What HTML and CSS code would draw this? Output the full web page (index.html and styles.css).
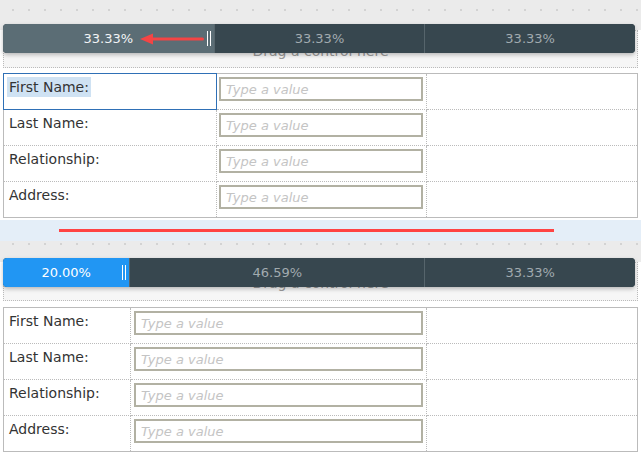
FILE: index.html
```html
<!DOCTYPE html>
<html lang="en">
<head>
    <meta charset="UTF-8">
    <meta name="viewport" content="width=device-width, initial-scale=1.0">
    <title>Column Splitter</title>
    <link rel="stylesheet" href="styles.css">
</head>
<body>

    <div class="panel panel-top">
        <div class="ruler"></div>
        <div class="drop-zone">
            <span class="drop-hint">Drag a control here</span>
            <div class="splitter">
                <div class="seg seg-grey" style="width:33.33%">
                    33.33%
                    <svg class="arrow" width="66" height="12" viewBox="0 0 66 12">
                        <polygon points="0,6 13,0.5 13,11.5" fill="#f44545"/>
                        <rect x="11" y="4.5" width="53" height="3" rx="1.5" fill="#f44545"/>
                    </svg>
                    <span class="grip"></span>
                </div>
                <div class="seg" style="width:33.33%">33.33%</div>
                <div class="seg" style="width:33.34%">33.33%</div>
            </div>
        </div>
        <table class="form-grid">
            <colgroup>
                <col style="width:213px">
                <col style="width:210px">
                <col>
            </colgroup>
            <tr>
                <td class="label-cell selected"><span class="label picked">First Name:</span></td>
                <td class="input-cell"><input type="text" placeholder="Type a value"></td>
                <td></td>
            </tr>
            <tr>
                <td class="label-cell"><span class="label">Last Name:</span></td>
                <td class="input-cell"><input type="text" placeholder="Type a value"></td>
                <td></td>
            </tr>
            <tr>
                <td class="label-cell"><span class="label">Relationship:</span></td>
                <td class="input-cell"><input type="text" placeholder="Type a value"></td>
                <td></td>
            </tr>
            <tr>
                <td class="label-cell"><span class="label">Address:</span></td>
                <td class="input-cell"><input type="text" placeholder="Type a value"></td>
                <td></td>
            </tr>
        </table>
    </div>

    <div class="divider"><span class="divider-line"></span></div>

    <div class="panel panel-bottom">
        <div class="ruler"></div>
        <div class="drop-zone">
            <span class="drop-hint">Drag a control here</span>
            <div class="splitter">
                <div class="seg seg-blue" style="width:20%">
                    20.00%
                    <span class="grip"></span>
                </div>
                <div class="seg" style="width:46.67%">46.59%</div>
                <div class="seg" style="width:33.33%">33.33%</div>
            </div>
        </div>
        <table class="form-grid">
            <colgroup>
                <col style="width:127px">
                <col style="width:296px">
                <col>
            </colgroup>
            <tr>
                <td class="label-cell"><span class="label">First Name:</span></td>
                <td class="input-cell"><input type="text" placeholder="Type a value"></td>
                <td></td>
            </tr>
            <tr>
                <td class="label-cell"><span class="label">Last Name:</span></td>
                <td class="input-cell"><input type="text" placeholder="Type a value"></td>
                <td></td>
            </tr>
            <tr>
                <td class="label-cell"><span class="label">Relationship:</span></td>
                <td class="input-cell"><input type="text" placeholder="Type a value"></td>
                <td></td>
            </tr>
            <tr>
                <td class="label-cell"><span class="label">Address:</span></td>
                <td class="input-cell"><input type="text" placeholder="Type a value"></td>
                <td></td>
            </tr>
        </table>
    </div>

</body>
</html>
```

FILE: styles.css
```css
body {
    margin: 0;
    font-family: "DejaVu Sans", Verdana, sans-serif;
    background-color: white;
    color: #333;
    overflow: hidden;
}
.panel {
    background-color: white;
}
.ruler {
    height: 30px;
    background-color: #ebebeb;
    background-image: radial-gradient(circle, #d3d3d3 1px, transparent 1.2px);
    background-size: 16px 16px;
    background-repeat: repeat-x;
    background-position: 5px 2px;
}
.panel-bottom .ruler {
    height: 21px;
    background-position: 5px -5px;
}
.drop-zone {
    position: relative;
    height: 36px;
    margin-left: 3px;
    width: 633px;
    border: 1px dotted #bbb;
    background-color: #f6f6f6;
    text-align: center;
}
.panel-bottom .drop-zone {
    height: 37px;
}
.drop-hint {
    display: block;
    padding-top: 12px;
    font-size: 14px;
    line-height: 16px;
    color: #9a9a9a;
}
.splitter {
    position: absolute;
    top: -7px;
    left: -1px;
    width: 632px;
    height: 29px;
    display: flex;
    border-radius: 4px;
    overflow: hidden;
    background-color: #37474f;
    box-shadow: 0 2px 4px rgba(0, 0, 0, 0.25);
}
.panel-bottom .splitter {
    top: -5px;
}
.seg {
    position: relative;
    box-sizing: border-box;
    line-height: 29px;
    font-size: 13px;
    color: #a2abaf;
    background-color: #37474f;
    border-left: 1px solid #56656c;
    text-align: center;
}
.seg:first-child {
    border-left: none;
}
.seg-grey {
    background-color: #5b6d75;
    color: #f2f4f5;
}
.seg-blue {
    background-color: #2196f3;
    color: white;
}
.grip {
    position: absolute;
    top: 7px;
    right: 3px;
    width: 2px;
    height: 15px;
    border-left: 1px solid white;
    border-right: 1px solid white;
}
.arrow {
    position: absolute;
    left: 137px;
    top: 9px;
}
.form-grid {
    margin: 5px 0 0 3px;
    width: 635px;
    table-layout: fixed;
    border-collapse: collapse;
    border: 1px solid #bbb;
}
.panel-bottom .form-grid {
    margin-top: 6px;
}
.form-grid td {
    height: 36px;
    padding: 0;
    box-sizing: border-box;
    border: 1px dotted #bbb;
    vertical-align: top;
}
.label-cell {
    padding: 3px 4px 0 3px !important;
}
.label {
    display: inline-block;
    padding: 2px;
    font-size: 14px;
    line-height: 16px;
    color: #333;
}
.picked {
    background-color: #cfe2f3;
}
.form-grid td.selected {
    border: 1px solid #2f70b6;
}
.input-cell {
    padding: 3px 3px 0 2px !important;
}
.input-cell input {
    display: block;
    box-sizing: border-box;
    width: 100%;
    height: 24px;
    margin: 0;
    padding: 0 5px;
    border: 2px solid #b2b1a3;
    font-family: "DejaVu Sans", Verdana, sans-serif;
    font-size: 13px;
    outline: none;
}
.input-cell input::placeholder {
    color: #c4c4c4;
    font-style: italic;
}
.panel-bottom .input-cell {
    padding: 3px 3px 0 3px !important;
}
.divider {
    display: flex;
    align-items: center;
    height: 21px;
    margin-top: 2px;
    background-color: #e4eef8;
}
.divider-line {
    display: block;
    margin-left: 59px;
    width: 495px;
    height: 3px;
    background-color: #ff4444;
}
```
